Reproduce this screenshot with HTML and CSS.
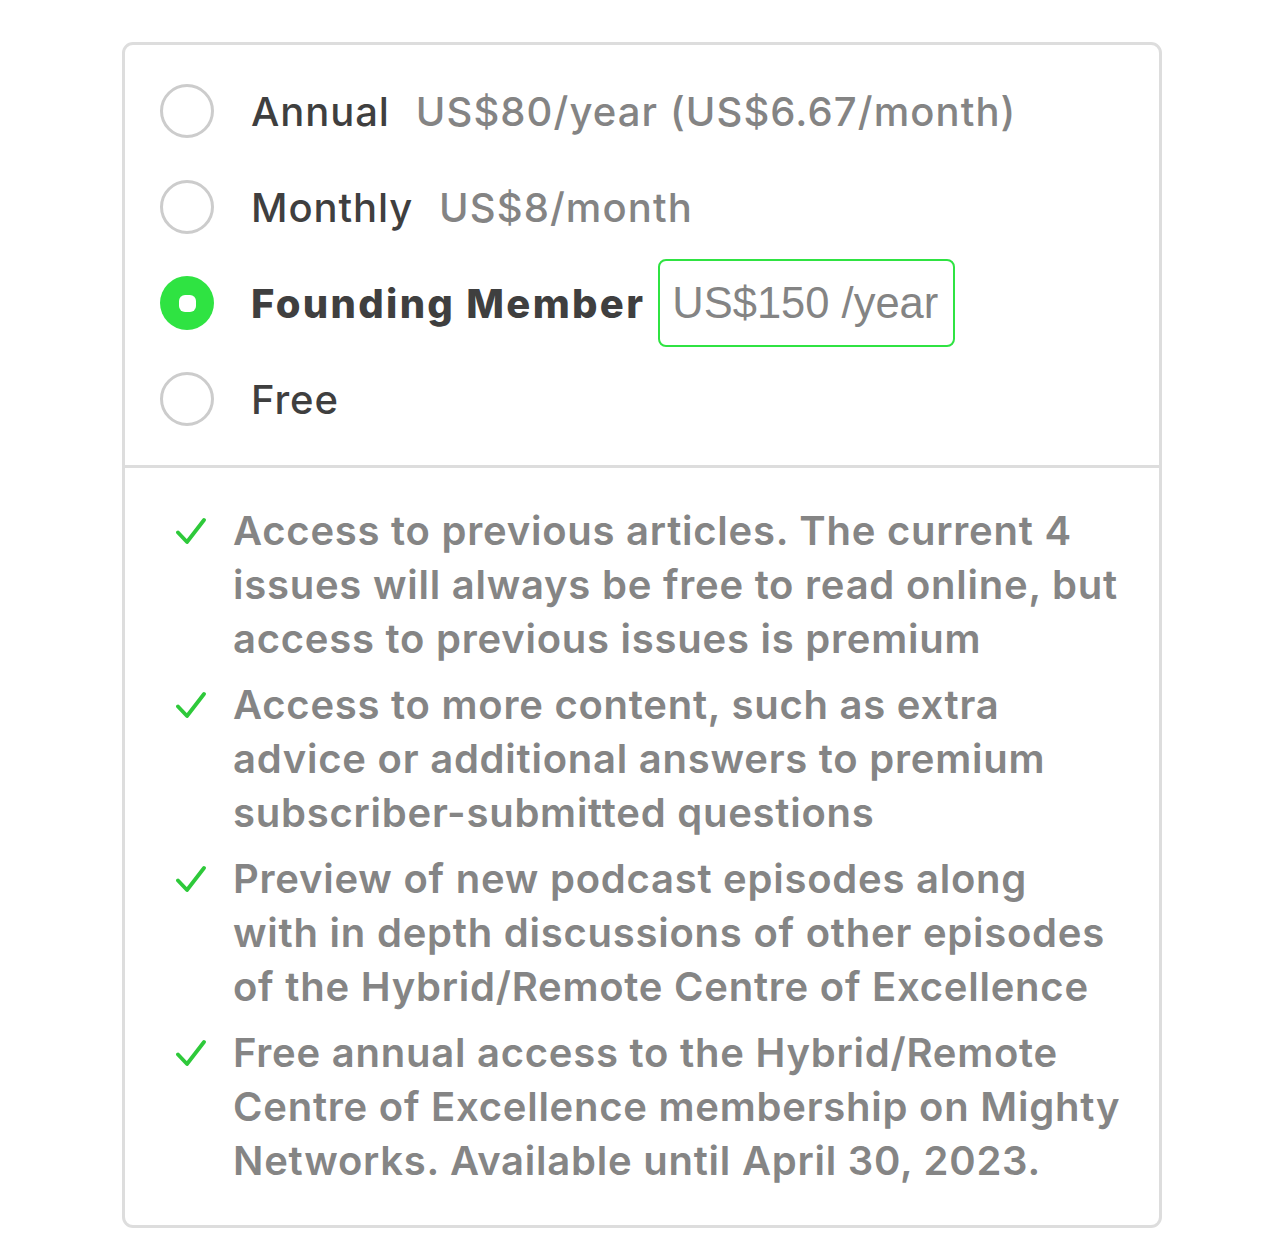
FILE: index.html
```html
<!DOCTYPE html>
<html>
<head>
<meta charset="utf-8">
<link rel="stylesheet" href="styles.css">
</head>
<body>
<div class="card">
  <div class="plans">
    <div class="plan">
      <span class="radio"></span>
      <span class="name">Annual</span>
      <span class="price">US$80/year (US$6.67/month)</span>
    </div>
    <div class="plan">
      <span class="radio"></span>
      <span class="name">Monthly</span>
      <span class="price">US$8/month</span>
    </div>
    <div class="plan">
      <span class="radio radio-on"><span class="dot"></span></span>
      <span class="name name-bold">Founding Member</span>
      <span class="price-box">US$150 /year</span>
    </div>
    <div class="plan">
      <span class="radio"></span>
      <span class="name">Free</span>
    </div>
  </div>
  <ul class="features">
    <li><svg class="check" viewBox="0 0 30 30"><path d="M2 15.5 L11 25 L28 3" fill="none" stroke="#2ec93a" stroke-width="3.8" stroke-linecap="round" stroke-linejoin="round"/></svg><span>Access to previous articles. The current 4 issues will always be free to read online, but access to previous issues is premium</span></li>
    <li><svg class="check" viewBox="0 0 30 30"><path d="M2 15.5 L11 25 L28 3" fill="none" stroke="#2ec93a" stroke-width="3.8" stroke-linecap="round" stroke-linejoin="round"/></svg><span>Access to more content, such as extra advice or additional answers to premium subscriber-submitted questions</span></li>
    <li><svg class="check" viewBox="0 0 30 30"><path d="M2 15.5 L11 25 L28 3" fill="none" stroke="#2ec93a" stroke-width="3.8" stroke-linecap="round" stroke-linejoin="round"/></svg><span>Preview of new podcast episodes along with in depth discussions of other episodes of the Hybrid/Remote Centre of Excellence</span></li>
    <li><svg class="check" viewBox="0 0 30 30"><path d="M2 15.5 L11 25 L28 3" fill="none" stroke="#2ec93a" stroke-width="3.8" stroke-linecap="round" stroke-linejoin="round"/></svg><span>Free annual access to the Hybrid/Remote Centre of Excellence membership on Mighty Networks. Available until April 30, 2023.</span></li>
  </ul>
</div>
</body>
</html>
```
FILE: styles.css
```css
html, body {
  margin: 0;
  padding: 0;
  background: #fff;
}
body {
  font-family: Inter, "Noto Sans", sans-serif;
}
.card {
  margin: 42px 0 0 122px;
  width: 1034px;
  border: 3px solid #dddddd;
  border-radius: 11px;
}
.plans {
  padding: 39px 0 39px 35px;
  display: flex;
  flex-direction: column;
  gap: 42px;
  border-bottom: 3px solid #dddddd;
}
.plan {
  display: flex;
  align-items: center;
  height: 54px;
}
.radio {
  box-sizing: border-box;
  width: 54px;
  height: 54px;
  border: 3px solid #cccccc;
  border-radius: 50%;
  flex: none;
  margin-right: 37px;
  display: flex;
  align-items: center;
  justify-content: center;
}
.radio-on {
  border: none;
  background: #2fe342;
}
.dot {
  width: 17px;
  height: 17px;
  border-radius: 6px;
  background: #fff;
}
.name {
  font-size: 40px;
  font-weight: 500;
  letter-spacing: 0.9px;
  color: #3f3f3f;
  margin-right: 26px;
}
.name-bold {
  font-weight: 800;
  letter-spacing: 2.3px;
  margin-right: 13px;
}
.price {
  font-size: 40px;
  font-weight: 500;
  letter-spacing: 1.1px;
  color: #848484;
}
.price-box {
  box-sizing: border-box;
  height: 88px;
  display: flex;
  align-items: center;
  padding: 0 15px 0 12px;
  border: 2px solid #2fe342;
  border-radius: 8px;
  font-family: "Liberation Sans", Arial, sans-serif;
  font-size: 43.5px;
  color: #848484;
}
.features {
  list-style: none;
  margin: 0;
  padding: 36px 38px 37px 51px;
  display: flex;
  flex-direction: column;
  gap: 12px;
}
.features li {
  display: flex;
  align-items: flex-start;
  font-size: 40px;
  line-height: 54px;
  font-weight: 600;
  letter-spacing: 0.76px;
  color: #858585;
}
.check {
  width: 30px;
  height: 30px;
  flex: none;
  margin: 13px 27px 0 0;
}
```
